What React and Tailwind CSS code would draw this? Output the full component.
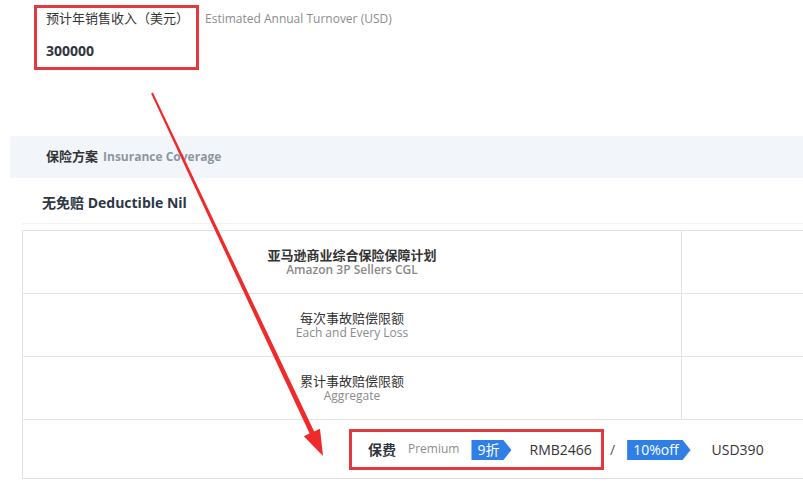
import React from 'react';

// Price tag with a pointed right edge
const Tag = ({ children }) => (
  <span className="inline-flex h-[20px] items-center bg-[#2f7fe6] pl-[6px] pr-[12px] text-[14px] leading-[20px] text-white [clip-path:polygon(0_0,calc(100%-8px)_0,100%_50%,calc(100%-8px)_100%,0_100%)]">
    {children}
  </span>
);

const Row = ({ title, sub, bold }) => (
  <div className="flex h-[63px] border-b border-[#e3e3e3]">
    <div className="flex w-[659px] flex-col items-center justify-center border-r border-[#e3e3e3]">
      <div className={`text-[13px] leading-[15px] text-[#333] ${bold ? 'font-semibold' : ''}`}>{title}</div>
      <div className={`text-[12px] leading-[14px] text-[#8a8a8a] ${bold ? 'font-semibold' : ''}`}>{sub}</div>
    </div>
    <div className="flex-1" />
  </div>
);

export default function App() {
  return (
    <div className="relative h-[496px] w-[803px] overflow-hidden bg-white font-['Open_Sans','Noto_Sans_CJK_SC',sans-serif]">
      {/* turnover field */}
      <div className="ml-[34px] mt-[5px] flex items-start">
        <div className="w-[165px] border-[3px] border-[#e03a3e] pb-[6px] pl-[9px] pt-[1px]">
          <div className="text-[13px] leading-[18px] text-[#333]">预计年销售收入（美元）</div>
          <div className="mt-[14px] text-[14px] font-bold leading-[20px] text-[#2f3540]">300000</div>
        </div>
        <span className="ml-[6px] mt-[6px] text-[12px] leading-[16px] text-[#8c8c8c]">Estimated Annual Turnover (USD)</span>
      </div>

      {/* coverage header */}
      <div className="ml-[10px] mt-[66px] flex h-[42px] items-center bg-[#f2f6fb] pl-[36px]">
        <span className="text-[13px] font-bold text-[#333]">保险方案</span>
        <span className="ml-[5px] text-[12px] font-bold text-[#8a96a3]">Insurance Coverage</span>
      </div>

      <div className="ml-[22px] mt-[15px] border-b border-[#f3f3f3] pb-[10px] pl-[20px] text-[14px] font-bold leading-[20px] text-[#2d3746]">
        无免赔 Deductible Nil
      </div>

      {/* plan table */}
      <div className="ml-[22px] mt-[6px] w-[820px] border-l border-t border-[#e3e3e3]">
        <Row title="亚马逊商业综合保险保障计划" sub="Amazon 3P Sellers CGL" bold />
        <Row title="每次事故赔偿限额" sub="Each and Every Loss" />
        <Row title="累计事故赔偿限额" sub="Aggregate" />
        <div className="flex h-[59px] items-center border-b border-[#e3e3e3] pl-[326px]">
          <div className="flex h-[41px] w-[255px] items-center border-[3px] border-[#e03a3e] pl-[16px]">
            <span className="text-[14px] font-semibold text-[#2f3540]">保费</span>
            <span className="ml-[12px] text-[12px] text-[#8c8c8c]">Premium</span>
            <span className="ml-[12px]"><Tag>9折</Tag></span>
            <span className="ml-[18px] text-[14px] text-[#333]">RMB2466</span>
          </div>
          <span className="ml-[6px] text-[14px] text-[#555]">/</span>
          <span className="ml-[12px]"><Tag>10%off</Tag></span>
          <span className="ml-[21px] text-[14px] text-[#333]">USD390</span>
        </div>
      </div>

      {/* annotation arrow */}
      <svg className="pointer-events-none absolute left-0 top-0" width="803" height="496">
        <polygon
          points="151.1,93.4 309.6,433.6 303.8,436.3 323,456 320,428.7 314.2,431.4 152.9,92.6"
          fill="#f02a2a"
        />
      </svg>
    </div>
  );
}
